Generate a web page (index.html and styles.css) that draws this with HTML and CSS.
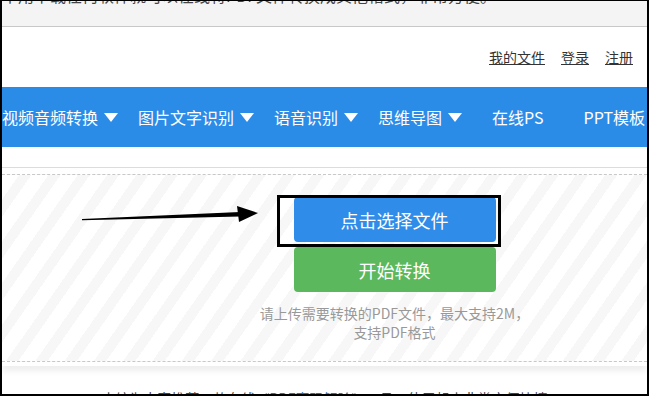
FILE: index.html
```html
<!DOCTYPE html>
<html lang="zh-CN">
<head>
    <meta charset="UTF-8">
    <meta name="viewport" content="width=device-width, initial-scale=1.0">
    <title>PDF在线转换</title>
    <link rel="stylesheet" href="styles.css">
</head>
<body>
    <div class="frame">
        <div class="topbar">
            <p class="topbar-text">不用下载任何软件就可以在线将PDF文件转换成其他格式，非常方便。</p>
        </div>

        <div class="header">
            <nav class="user-links">
                <a href="#">我的文件</a>
                <a href="#">登录</a>
                <a href="#">注册</a>
            </nav>
        </div>

        <nav class="menu">
            <a href="#" class="menu-item has-sub">视频音频转换<span class="caret"></span></a>
            <a href="#" class="menu-item has-sub">图片文字识别<span class="caret"></span></a>
            <a href="#" class="menu-item has-sub">语音识别<span class="caret"></span></a>
            <a href="#" class="menu-item has-sub">思维导图<span class="caret"></span></a>
            <a href="#" class="menu-item">在线PS</a>
            <a href="#" class="menu-item">PPT模板</a>
        </nav>

        <div class="section">
            <div class="dropzone">
                <div class="actions">
                    <button class="btn btn-blue">点击选择文件</button>
                    <button class="btn btn-green">开始转换</button>
                    <p class="hint">请上传需要转换的PDF文件，最大支持2M，支持PDF格式</p>
                </div>
            </div>
        </div>

        <p class="intro">小编为大家推荐一款在线<a href="#">《PDF密码解除》</a>工具，使用起来非常方便快捷</p>

        <!-- annotation drawn over the screenshot -->
        <div class="mark-box"></div>
        <svg class="mark-arrow" width="178" height="19" viewBox="0 0 178 19">
            <polygon points="0,14 158,7 158,11.5 0,15.2" fill="#000"/>
            <polygon points="155,1 176,8 157,17" fill="#000"/>
        </svg>
    </div>
</body>
</html>
```

FILE: styles.css
```css
body {
    margin: 0;
    padding: 0;
    font-family: "Noto Sans CJK SC", "Noto Sans", sans-serif;
    background: #fff;
}
.frame {
    position: relative;
    width: 649px;
    height: 396px;
    box-sizing: border-box;
    border: 2px solid #000;
    border-top-width: 1px;
    overflow: hidden;
    background: #fff;
}
.topbar {
    height: 25px;
    background: #f4f4f4;
    border-bottom: 1px solid #c8c8c8;
    overflow: hidden;
}
.topbar-text {
    margin: -15px 0 0 0;
    font-size: 16px;
    line-height: 18px;
    color: #444;
    white-space: nowrap;
}
.header {
    height: 60px;
    display: flex;
    justify-content: flex-end;
    align-items: center;
    padding-right: 14px;
}
.user-links {
    display: flex;
    gap: 16px;
}
.user-links a {
    font-size: 14px;
    line-height: 20px;
    color: #333;
    text-decoration: underline;
}
.menu {
    height: 60px;
    background: #2b8ce8;
    display: flex;
    align-items: center;
    white-space: nowrap;
}
.menu-item {
    display: flex;
    align-items: center;
    padding: 0 20px;
    font-size: 16px;
    line-height: 22px;
    color: #fff;
    text-decoration: none;
}
.menu-item.has-sub {
    padding: 0 10px;
}
.menu-item:first-child {
    padding-left: 0;
}
.caret {
    width: 0;
    height: 0;
    margin-left: 6px;
    border-left: 7px solid transparent;
    border-right: 7px solid transparent;
    border-top: 9px solid #fff;
}
.section {
    margin-top: 20px;
    border-top: 1px solid #dcdcdc;
    padding: 6px 0 4px;
    box-shadow: 0 5px 6px rgba(0, 0, 0, 0.07);
}
.dropzone {
    border-top: 1px dashed #c8c8c8;
    border-bottom: 1px dashed #c8c8c8;
    padding: 22px 0 19px 140px;
    display: flex;
    justify-content: center;
    background: repeating-linear-gradient(125deg, #fff 0 14px, #f7f7f7 14px 24px);
}
.actions {
    width: 202px;
    display: flex;
    flex-direction: column;
    align-items: center;
    gap: 5px;
}
.btn {
    width: 202px;
    height: 45px;
    border: none;
    border-radius: 4px;
    color: #fff;
    font-family: inherit;
    font-size: 18px;
    cursor: pointer;
}
.btn-blue {
    background: #2f8de9;
}
.btn-green {
    background: #5cb85c;
}
.hint {
    margin: 7px 0 0;
    width: 270px;
    font-size: 14px;
    line-height: 19px;
    color: #999;
    text-align: center;
}
.intro {
    margin: 20px 0 0;
    font-size: 14px;
    line-height: 24px;
    color: #444;
    text-align: center;
    white-space: nowrap;
}
.intro a {
    color: #2b6fb8;
    text-decoration: none;
}
.mark-box {
    position: absolute;
    left: 275px;
    top: 194px;
    width: 224px;
    height: 52px;
    box-sizing: border-box;
    border: 3px solid #000;
}
.mark-arrow {
    position: absolute;
    left: 80px;
    top: 204px;
}
```
